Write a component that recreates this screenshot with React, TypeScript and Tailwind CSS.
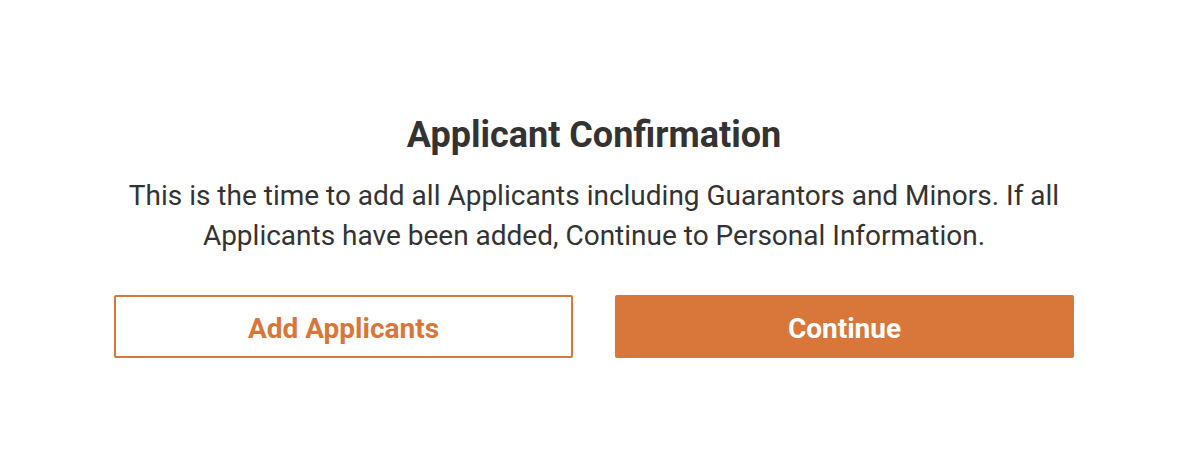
export default function App() {
  return (
    <div className="w-[1182px] h-[473px] bg-white flex justify-center font-['Roboto',sans-serif] text-[#333333]">
      <div className="w-[960px] ml-[6px] pt-[113px] flex flex-col items-center">
        <h1 className="text-[36px] leading-[44px] font-bold">Applicant Confirmation</h1>
        <p className="mt-[19px] text-[28px] leading-[40px] text-center">
          This is the time to add all Applicants including Guarantors and Minors. If all Applicants have been added, Continue to Personal Information.
        </p>
        <div className="mt-[39px] w-full flex justify-between">
          <button className="w-[459px] h-[63px] pt-[4px] border-2 border-[#d9773a] rounded-[2px] text-[#d9773a] text-[28px] font-bold">
            Add Applicants
          </button>
          <button className="w-[459px] h-[63px] pt-[4px] bg-[#d9773a] rounded-[2px] text-white text-[28px] font-bold">
            Continue
          </button>
        </div>
      </div>
    </div>
  );
}
